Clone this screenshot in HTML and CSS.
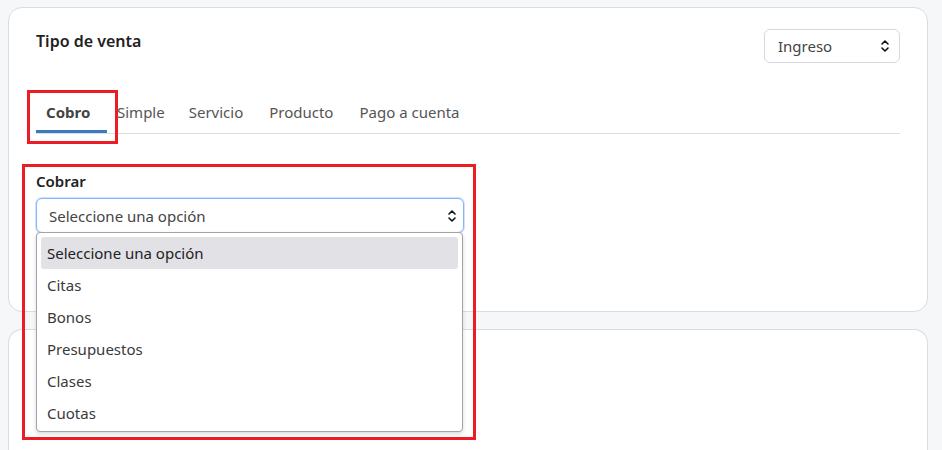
FILE: index.html
```html
<!DOCTYPE html>
<html>
    <head>
        <title>Tipo de venta</title>
        <link rel="stylesheet" href="styles.css">
    </head>
    <body>
        <div class="card">
            <div class="cardHeader">
                <h2 class="cardTitle">Tipo de venta</h2>
                <div class="fakeSelect smallSelect">
                    <span>Ingreso</span>
                    <svg class="selArrow" width="10" height="14" viewBox="0 0 10 14">
                        <path d="M2 5 L5 2 L8 5 M2 9 L5 12 L8 9" fill="none" stroke="#111" stroke-width="1.6" stroke-linecap="round" stroke-linejoin="round"/>
                    </svg>
                </div>
            </div>

            <div class="tabs">
                <div class="tab active">
                    Cobro
                    <div class="markBox tabMark"></div>
                </div>
                <div class="tab first">Simple</div>
                <div class="tab">Servicio</div>
                <div class="tab">Producto</div>
                <div class="tab">Pago a cuenta</div>
            </div>

            <div class="field">
                <div class="markBox fieldMark"></div>
                <label class="fieldLabel">Cobrar</label>
                <div class="fakeSelect bigSelect">
                    <span>Seleccione una opción</span>
                    <svg class="selArrow" width="10" height="14" viewBox="0 0 10 14">
                        <path d="M2 5 L5 2 L8 5 M2 9 L5 12 L8 9" fill="none" stroke="#111" stroke-width="1.6" stroke-linecap="round" stroke-linejoin="round"/>
                    </svg>
                </div>
                <ul class="dropList">
                    <li class="dropItem hover">Seleccione una opción</li>
                    <li class="dropItem">Citas</li>
                    <li class="dropItem">Bonos</li>
                    <li class="dropItem">Presupuestos</li>
                    <li class="dropItem">Clases</li>
                    <li class="dropItem">Cuotas</li>
                </ul>
            </div>
        </div>

        <div class="card second"></div>
    </body>
</html>
```

FILE: styles.css
```css
body{
    font-family: "Noto Sans", sans-serif;
    background-color: #f6f7f9;
    margin: 0;
    padding: 7px 14px 0 8px;
    height: 450px;
    overflow: hidden;
    box-sizing: border-box;
}

.card{
    background-color: #ffffff;
    border: 1px solid #d8dce5;
    border-radius: 14px;
    padding: 21px 27px 0 27px;
    height: 305px;
    box-sizing: border-box;
}

.second{
    margin-top: 17px;
    height: 121px;
    border-bottom: none;
    border-radius: 14px 14px 0 0;
}

.cardHeader{
    display: flex;
    justify-content: space-between;
    align-items: flex-start;
}

.cardTitle{
    margin: 0;
    font-size: 16px;
    line-height: 24px;
    font-weight: 600;
    color: #222;
}

.fakeSelect{
    display: flex;
    align-items: center;
    justify-content: space-between;
    background-color: #fff;
    border: 1px solid #d3d7df;
    border-radius: 6px;
    box-sizing: border-box;
    font-size: 15px;
    color: #444;
}

.smallSelect{
    width: 136px;
    height: 34px;
    padding: 0 9px 0 13px;
}

.bigSelect{
    width: 428px;
    height: 35px;
    padding: 0 6px 0 12px;
    border-color: #86b7fe;
    box-shadow: 0 0 0 1px #cfe2ff;
}

.selArrow{
    display: block;
}

.tabs{
    display: flex;
    margin-top: 28px;
    border-bottom: 1px solid #dadde4;
}

.tab{
    position: relative;
    padding: 10px 13px 10px 13px;
    line-height: 22px;
    font-size: 15px;
    color: #555;
}

.tab.first{
    padding-left: 10px;
    padding-right: 11px;
}

.tab.active{
    font-weight: 700;
    color: #444;
    padding: 10px 0 7px 10px;
    width: 71px;
    box-sizing: border-box;
    border-bottom: 3px solid #3a7abd;
}

.markBox{
    position: absolute;
    border: 3px solid #ec1c24;
    box-sizing: border-box;
    pointer-events: none;
}

.tabMark{
    left: -9px;
    top: -1px;
    width: 91px;
    height: 54px;
}

.field{
    position: relative;
    margin-top: 36px;
    width: 428px;
}

.fieldMark{
    left: -14px;
    top: -6px;
    width: 454px;
    height: 276px;
}

.fieldLabel{
    display: block;
    font-size: 15px;
    font-weight: 600;
    line-height: 22px;
    color: #222;
    margin-bottom: 6px;
}

.dropList{
    position: absolute;
    left: 0;
    top: 62px;
    width: 427px;
    margin: 0;
    padding: 4px 4px 2px 4px;
    list-style: none;
    background-color: #fff;
    border: 1px solid #a3a3a3;
    border-radius: 4px;
    box-shadow: 0 2px 4px rgba(0, 0, 0, 0.15);
    box-sizing: border-box;
}

.dropItem{
    height: 32px;
    line-height: 32px;
    padding: 0 6px;
    font-size: 15px;
    color: #3a3a3a;
    border-radius: 3px;
}

.dropItem.hover{
    background-color: #e1e1e6;
    color: #222;
}
```
